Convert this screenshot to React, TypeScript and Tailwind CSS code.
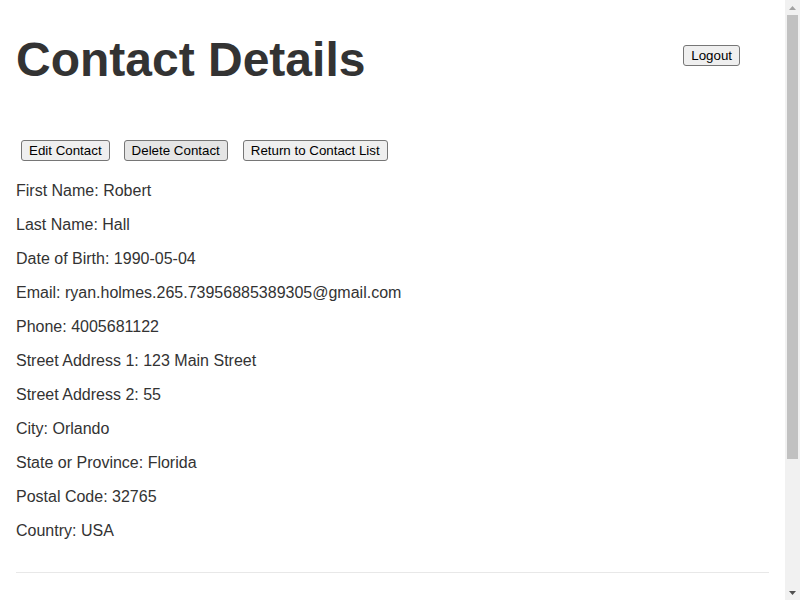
import React from "react";

const FIELDS: [string, string][] = [
  ["First Name", "Robert"],
  ["Last Name", "Hall"],
  ["Date of Birth", "1990-05-04"],
  ["Email", "ryan.holmes.265.73956885389305@gmail.com"],
  ["Phone", "4005681122"],
  ["Street Address 1", "123 Main Street"],
  ["Street Address 2", "55"],
  ["City", "Orlando"],
  ["State or Province", "Florida"],
  ["Postal Code", "32765"],
  ["Country", "USA"],
];

function Btn({ children, hover = false }: { children: React.ReactNode; hover?: boolean }) {
  return (
    <button
      className={
        "flex h-[21px] items-center rounded-[3px] border border-[#767676] px-[7px] text-[13.33px] leading-[15px] text-black " +
        (hover ? "bg-[#e5e5e5]" : "bg-[#efefef]")
      }
    >
      {children}
    </button>
  );
}

// fake browser scrollbar, the page in the shot is taller than the window
function Scrollbar() {
  return (
    <div className="flex h-[600px] w-[15px] shrink-0 flex-col bg-[#f1f1f1]">
      <div className="flex h-[15px] items-center justify-center">
        <svg width="7" height="4" viewBox="0 0 7 4">
          <path d="M3.5 0 L7 4 L0 4 Z" fill="#a3a3a3" />
        </svg>
      </div>
      <div className="flex flex-1 flex-col px-[2px]">
        <div className="h-[444px] bg-[#c1c1c1]" />
      </div>
      <div className="flex h-[15px] items-center justify-center">
        <svg width="7" height="4" viewBox="0 0 7 4">
          <path d="M0 0 L7 0 L3.5 4 Z" fill="#505050" />
        </svg>
      </div>
    </div>
  );
}

export default function App() {
  return (
    <div className="flex h-[600px] overflow-hidden bg-white font-['Liberation_Sans',Arial,sans-serif] text-[#333]">
      <main className="flex-1 px-4">
        {/* header */}
        <div className="flex items-start justify-between">
          <h1 className="mt-[32px] text-[48px] font-bold leading-[55px]">Contact Details</h1>
          <div className="mr-[29px] mt-[45px] flex">
            <Btn>Logout</Btn>
          </div>
        </div>

        <div className="mt-[53px] flex gap-[14px] pl-[5px]">
          <Btn>Edit Contact</Btn>
          <Btn hover>Delete Contact</Btn>
          <div className="ml-px flex">
            <Btn>Return to Contact List</Btn>
          </div>
        </div>

        <div className="mt-[21px]">
          {FIELDS.map(([label, value]) => (
            <p key={label} className="mb-4 text-base leading-[18px]">
              {label}: {value}
            </p>
          ))}
        </div>

        <hr className="mt-[32px] border-t border-[#e8e8e8]" />
      </main>
      <Scrollbar />
    </div>
  );
}
